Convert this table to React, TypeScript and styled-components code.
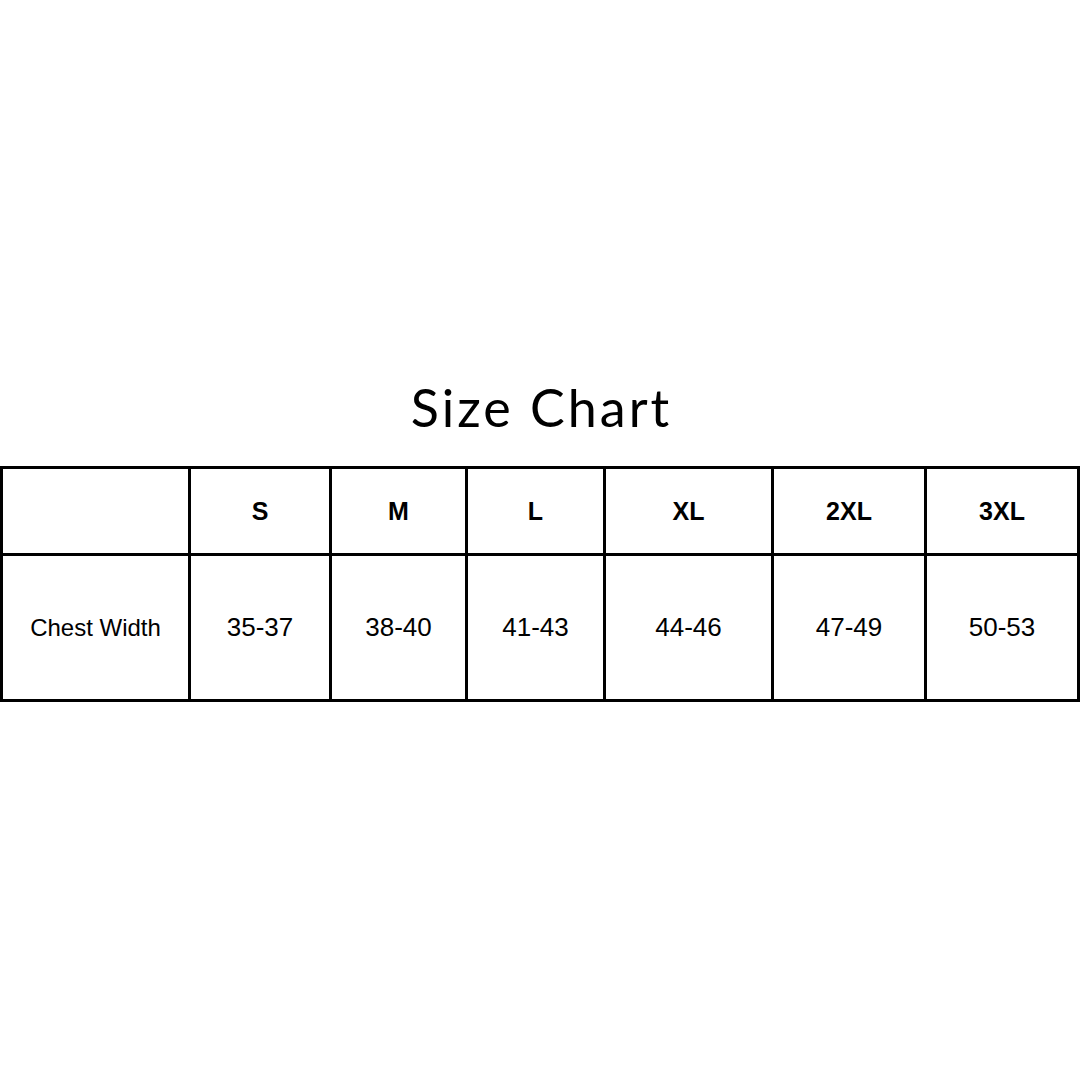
import React from "react";
import styled, { createGlobalStyle } from "styled-components";

const Global = createGlobalStyle`
  html, body { margin: 0; padding: 0; background: #ffffff; }
  body { width: 1080px; height: 1080px; overflow: hidden; }
`;

const Page = styled.div`
  width: 1080px;
  height: 1080px;
  background: #ffffff;
  display: flex;
  flex-direction: column;
  align-items: center;
  padding-top: 376px;
  box-sizing: border-box;
`;

const Title = styled.h1`
  margin: 0 0 28px 3px;
  font-family: "Lato", "DejaVu Sans", sans-serif;
  font-weight: 400;
  font-size: 52px;
  line-height: 62px;
  color: #000000;
  letter-spacing: 3px;
`;

const Table = styled.div`
  width: 1080px;
  box-sizing: border-box;
  display: grid;
  grid-template-columns: 185px 138px 133px 135px 165px 150px 150px;
  grid-template-rows: 84px 143px;
  gap: 3px;
  padding: 3px;
  background: #000000;
`;

const Cell = styled.div<{ $head?: boolean; $label?: boolean }>`
  background: #ffffff;
  display: flex;
  align-items: center;
  justify-content: center;
  font-family: "Liberation Sans", Arial, sans-serif;
  color: #000000;
  font-weight: ${(p) => (p.$head ? 700 : 400)};
  font-size: ${(p) => (p.$head ? "25px" : p.$label ? "24px" : "26px")};
`;

const sizes = ["S", "M", "L", "XL", "2XL", "3XL"];
const chest = ["35-37", "38-40", "41-43", "44-46", "47-49", "50-53"];

export default function App() {
  return (
    <>
      <Global />
      <Page>
        <Title>Size Chart</Title>
        <Table>
          <Cell $head />
          {sizes.map((s) => (
            <Cell $head key={s}>
              {s}
            </Cell>
          ))}
          <Cell $label>Chest Width</Cell>
          {chest.map((c) => (
            <Cell key={c}>{c}</Cell>
          ))}
        </Table>
      </Page>
    </>
  );
}
